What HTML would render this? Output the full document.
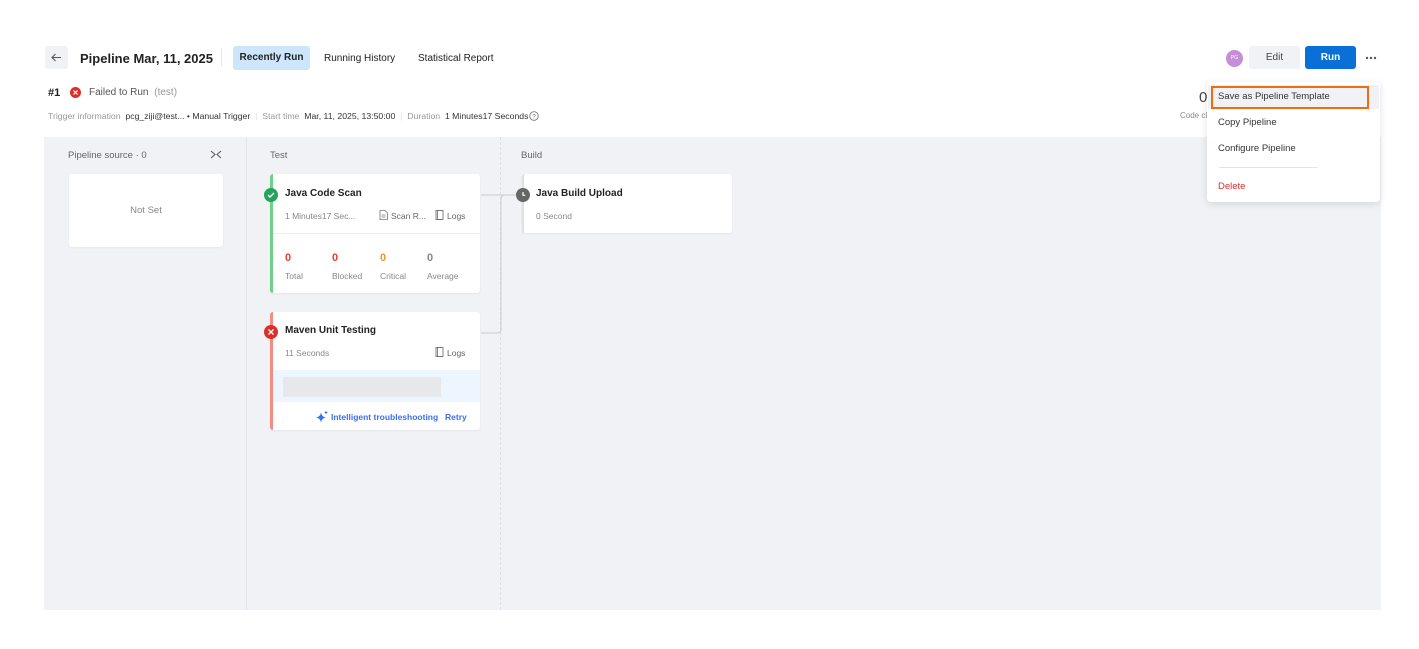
<!DOCTYPE html>
<html><head><meta charset="utf-8"><style>
*{box-sizing:border-box;margin:0;padding:0}
body{width:1419px;height:649px;background:#fff;font-family:"Liberation Sans",sans-serif;position:relative;overflow:hidden;color:#222}
.a{position:absolute}
.t{font-size:9px;color:#888}
.card{position:absolute;background:#fff;border-radius:3px;box-shadow:0 1px 2px rgba(0,0,0,.05)}
.ttl{font-size:10px;font-weight:bold;color:#222}
</style></head><body>
<div class="a" style="left:45px;top:46px;width:23px;height:23px;background:#f0f2f5;border-radius:3px"></div>
<svg class="a" style="left:50px;top:51px" width="13" height="13" viewBox="0 0 13 13"><path d="M11 6.5H2M5.5 3L2 6.5 5.5 10" stroke="#555" stroke-width="1.1" fill="none"/></svg>
<div class="a" style="left:80px;top:51px;font-size:13px;font-weight:bold">Pipeline Mar, 11, 2025</div>
<div class="a" style="left:221px;top:48px;width:1px;height:18px;background:#e5e5e5"></div>
<div class="a" style="left:233px;top:46px;width:77px;height:24px;background:#cde6fb;border-radius:3px;font-size:10px;font-weight:bold;text-align:center;line-height:24px">Recently Run</div>
<div class="a" style="left:324px;top:53px;font-size:10px">Running History</div>
<div class="a" style="left:418px;top:53px;font-size:10px">Statistical Report</div>

<div class="a" style="left:48px;top:87px;font-size:11px;font-weight:bold">#1</div>
<svg class="a" style="left:70px;top:87px" width="11" height="11" viewBox="0 0 11 11"><circle cx="5.5" cy="5.5" r="5.5" fill="#d9302c"/><path d="M3.5 3.5l4 4M7.5 3.5l-4 4" stroke="#fff" stroke-width="1.2"/></svg>
<div class="a" style="left:89px;top:87px;font-size:10px;color:#555">Failed to Run <span style="color:#999;margin-left:3px">(test)</span></div>
<div class="a" style="left:48px;top:111px;font-size:8.7px;color:#999;white-space:nowrap">Trigger information &nbsp;<span style="color:#333">pcg_ziji@test... • Manual Trigger</span> <span style="color:#ddd">&nbsp;|&nbsp;</span> Start time &nbsp;<span style="color:#333">Mar, 11, 2025, 13:50:00</span> <span style="color:#ddd">&nbsp;|&nbsp;</span> Duration &nbsp;<span style="color:#333">1 Minutes17 Seconds</span></div>
<svg class="a" style="left:529px;top:111px" width="10" height="10" viewBox="0 0 10 10"><circle cx="5" cy="5" r="4.3" stroke="#777" fill="none" stroke-width=".9"/><text x="5" y="7.5" font-size="6.5" text-anchor="middle" fill="#777" font-family="Liberation Sans">?</text></svg>

<div class="a" style="left:1226px;top:50px;width:17px;height:17px;border-radius:50%;background:#c48fd8;color:#fff;font-size:5px;text-align:center;line-height:17px">PG</div>
<div class="a" style="left:1249px;top:46px;width:51px;height:23px;background:#f0f2f5;border-radius:3px;font-size:10px;text-align:center;line-height:23px;color:#444">Edit</div>
<div class="a" style="left:1305px;top:46px;width:51px;height:23px;background:#0a6fd6;border-radius:3px;font-size:10px;font-weight:bold;text-align:center;line-height:23px;color:#fff">Run</div>
<svg class="a" style="left:1365px;top:56px" width="12" height="4"><circle cx="2" cy="2" r="1.2" fill="#555"/><circle cx="6" cy="2" r="1.2" fill="#555"/><circle cx="10" cy="2" r="1.2" fill="#555"/></svg>
<div class="a" style="left:1199px;top:89px;font-size:15px;color:#444">0</div>
<div class="a" style="left:1180px;top:111px;font-size:8px;color:#888">Code cl</div>

<div class="a" style="left:44px;top:137px;width:1337px;height:473px;background:#f0f2f5"></div>
<div class="a" style="left:246px;top:137px;width:1px;height:473px;background:#e2e5ea"></div>
<div class="a" style="left:500px;top:137px;width:0;height:473px;border-left:1px dashed #dcdfe4"></div>
<div class="a" style="left:68px;top:150px;font-size:9.5px;color:#666">Pipeline source · 0</div>
<svg class="a" style="left:210px;top:150px" width="12" height="9"><path d="M1 1l4 3.5L1 8M11 1L7 4.5 11 8" stroke="#555" fill="none"/></svg>
<div class="a" style="left:270px;top:150px;font-size:9.5px;color:#666">Test</div>
<div class="a" style="left:521px;top:150px;font-size:9.5px;color:#666">Build</div>
<div class="card" style="left:69px;top:174px;width:154px;height:73px;text-align:center;line-height:73px;font-size:9.5px;color:#888">Not Set</div>

<svg class="a" style="left:478px;top:190px" width="48" height="150"><path d="M3 5H40M27 5q-4 0-4 4v130q0 4-4 4H3" stroke="#ccc" fill="none"/></svg>

<div class="card" style="left:270px;top:174px;width:210px;height:119px;border-left:3px solid #6dd288"></div>
<div class="a" style="left:273px;top:233px;width:207px;height:1px;background:#eee"></div>
<svg class="a" style="left:264px;top:188px" width="14" height="14"><circle cx="7" cy="7" r="7" fill="#24a35a"/><path d="M4 7l2 2 4-4" stroke="#fff" stroke-width="1.4" fill="none"/></svg>
<div class="a ttl" style="left:285px;top:188px">Java Code Scan</div>
<div class="a t" style="left:285px;top:211px;font-size:8.5px">1 Minutes17 Sec...</div>
<svg class="a" style="left:379px;top:210px" width="9" height="10"><path d="M1 .5h5l2.5 2.5v6.5H1z M2.5 5h4M2.5 7h4" stroke="#777" fill="none" stroke-width=".8"/></svg>
<div class="a t" style="left:391px;top:211px;font-size:8.5px;color:#666">Scan R...</div>
<svg class="a" style="left:435px;top:210px" width="9" height="10"><path d="M1 .5h7v9H1z M2.5 .5v9" stroke="#777" fill="none" stroke-width=".9"/></svg>
<div class="a t" style="left:447px;top:211px;font-size:8.5px;color:#666">Logs</div>
<div class="a" style="left:285px;top:252px;font-size:11px;font-weight:bold;color:#e53d30">0</div>
<div class="a" style="left:332px;top:252px;font-size:11px;font-weight:bold;color:#e53d30">0</div>
<div class="a" style="left:380px;top:252px;font-size:11px;font-weight:bold;color:#f39423">0</div>
<div class="a" style="left:427px;top:252px;font-size:11px;font-weight:bold;color:#888">0</div>
<div class="a t" style="left:285px;top:271px;font-size:8.5px">Total</div>
<div class="a t" style="left:332px;top:271px;font-size:8.5px">Blocked</div>
<div class="a t" style="left:380px;top:271px;font-size:8.5px">Critical</div>
<div class="a t" style="left:427px;top:271px;font-size:8.5px">Average</div>

<div class="card" style="left:270px;top:312px;width:210px;height:118px;border-left:3px solid #f28c84"></div>
<div class="a" style="left:273px;top:370px;width:207px;height:32px;background:#edf5fe"></div>
<div class="a" style="left:283px;top:377px;width:158px;height:20px;background:#e6e8eb"></div>
<svg class="a" style="left:264px;top:325px" width="14" height="14"><circle cx="7" cy="7" r="7" fill="#d9302c"/><path d="M4.5 4.5l5 5M9.5 4.5l-5 5" stroke="#fff" stroke-width="1.3"/></svg>
<div class="a ttl" style="left:285px;top:325px">Maven Unit Testing</div>
<div class="a t" style="left:285px;top:348px;font-size:8.5px">11 Seconds</div>
<svg class="a" style="left:435px;top:347px" width="9" height="10"><path d="M1 .5h7v9H1z M2.5 .5v9" stroke="#777" fill="none" stroke-width=".9"/></svg>
<div class="a t" style="left:447px;top:348px;font-size:8.5px;color:#666">Logs</div>
<svg class="a" style="left:315px;top:410px" width="14" height="13"><path d="M6 2.5Q6.8 7 11 7.5 6.8 8 6 12.5 5.2 8 1 7.5 5.2 7 6 2.5z" fill="#3a6ff0"/><path d="M11 0.5Q11.3 2.2 13 2.5 11.3 2.8 11 4.5 10.7 2.8 9 2.5 10.7 2.2 11 .5z" fill="#3a6ff0"/></svg>
<div class="a" style="left:331px;top:412px;font-size:8.5px;font-weight:bold;color:#3a6ff0">Intelligent troubleshooting</div>
<div class="a" style="left:445px;top:412px;font-size:8.5px;font-weight:bold;color:#3a6ff0">Retry</div>

<div class="card" style="left:522px;top:174px;width:210px;height:59px;border-left:2px solid #dde1e6"></div>
<svg class="a" style="left:516px;top:188px" width="14" height="14"><circle cx="7" cy="7" r="7" fill="#666"/><path d="M7 4v3.3h2.3" stroke="#fff" stroke-width="1.2" fill="none"/></svg>
<div class="a ttl" style="left:536px;top:188px">Java Build Upload</div>
<div class="a t" style="left:536px;top:211px;font-size:8.5px">0 Second</div>

<div class="a" style="left:1207px;top:82px;width:173px;height:120px;background:#fff;border-radius:4px;box-shadow:0 2px 8px rgba(0,0,0,.12)"></div>
<div class="a" style="left:1208px;top:85px;width:171px;height:24px;background:#f0f2f5"></div>
<div class="a" style="left:1211px;top:86px;width:158px;height:23px;border:2px solid #f26b0f"></div>
<div class="a" style="left:1218px;top:91px;font-size:9.5px;color:#333">Save as Pipeline Template</div>
<div class="a" style="left:1218px;top:117px;font-size:9.5px;color:#333">Copy Pipeline</div>
<div class="a" style="left:1218px;top:143px;font-size:9.5px;color:#333">Configure Pipeline</div>
<div class="a" style="left:1219px;top:167px;width:99px;height:1px;background:#e5e5e5"></div>
<div class="a" style="left:1218px;top:181px;font-size:9.5px;color:#d9302c">Delete</div>
</body></html>
